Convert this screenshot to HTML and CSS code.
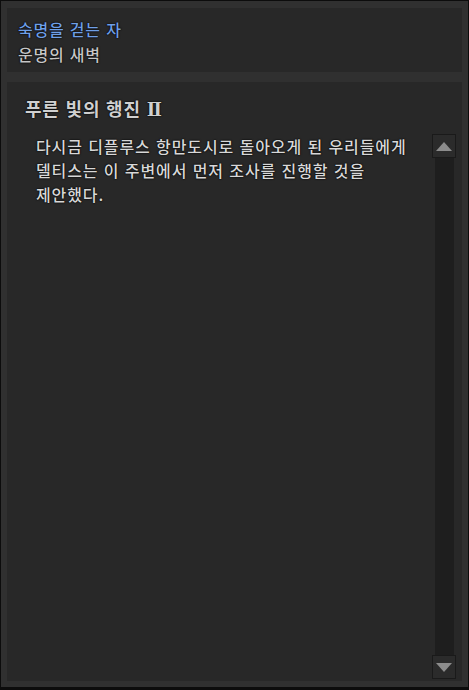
FILE: index.html
```html
<!DOCTYPE html>
<html lang="ko">
<head>
    <meta charset="UTF-8">
    <meta name="viewport" content="width=device-width, initial-scale=1.0">
    <title>퀘스트</title>
    <link rel="stylesheet" href="styles.css">
</head>
<body>

<div class="frame">
    <div class="header">
        <div class="quest-name">숙명을 걷는 자</div>
        <div class="chapter">운명의 새벽</div>
    </div>

    <div class="detail">
        <div class="detail-title">푸른 빛의 행진 <span class="numeral">Ⅱ</span></div>
        <div class="detail-body">
            <div class="detail-text">다시금 디플루스 항만도시로 돌아오게 된 우리들에게<br>델티스는 이 주변에서 먼저 조사를 진행할 것을<br>제안했다.</div>
            <div class="scrollbar">
                <div class="scroll-btn"><span class="arrow-up"></span></div>
                <div class="scroll-track"></div>
                <div class="scroll-btn"><span class="arrow-down"></span></div>
            </div>
        </div>
    </div>
</div>

</body>
</html>
```

FILE: styles.css
```css
html, body {
    margin: 0;
    height: 100%;
    background-color: #0c0c0c;
}
body {
    font-family: "Noto Sans CJK KR", "Noto Sans", sans-serif;
    padding: 1px 1px 3px 1px;
    box-sizing: border-box;
}
.frame {
    width: 467px;
    height: 686px;
    box-sizing: border-box;
    background-color: #303030;
    padding: 7px 6px 6px 6px;
    display: flex;
    flex-direction: column;
    gap: 10px;
}
.header {
    height: 64px;
    background-color: #282828;
    padding: 9px 0 0 11px;
    box-sizing: border-box;
}
.quest-name {
    color: #6f9fe6;
    font-size: 16px;
    font-weight: 500;
    letter-spacing: 0.8px;
    line-height: 25px;
    text-shadow: 0 0 2px #000, 0 0 1px #000;
}
.chapter {
    color: #c6c6c6;
    font-size: 16px;
    font-weight: 500;
    letter-spacing: 0.8px;
    line-height: 25px;
    text-shadow: 0 0 2px #000, 0 0 1px #000;
}
.detail {
    flex: 1;
    background-color: #282828;
    display: flex;
    flex-direction: column;
}
.detail-title {
    color: #d0d0d0;
    font-size: 18px;
    font-weight: bold;
    letter-spacing: 0.8px;
    line-height: 22px;
    padding: 15px 0 0 18px;
    text-shadow: 0 0 2px #000, 0 0 1px #000;
}
.numeral {
    font-family: "Liberation Serif", "DejaVu Serif", serif;
}
.detail-body {
    flex: 1;
    display: flex;
    padding: 13px 6px 2px 29px;
}
.detail-text {
    flex: 1;
    color: #d8d8d8;
    font-size: 16px;
    font-weight: 500;
    letter-spacing: 0.9px;
    line-height: 24px;
    padding-top: 0;
    text-shadow: 0 0 2px #000, 0 0 1px #000;
}
.scrollbar {
    width: 24px;
    display: flex;
    flex-direction: column;
    align-items: center;
}
.scroll-btn {
    width: 24px;
    height: 24px;
    box-sizing: border-box;
    background-color: #2b2b2b;
    border: 1px solid #1a1a1a;
    display: flex;
    align-items: center;
    justify-content: center;
}
.scroll-track {
    flex: 1;
    width: 19px;
    background-color: #1e1e1e;
}
.arrow-up {
    width: 0;
    height: 0;
    border-left: 8px solid transparent;
    border-right: 8px solid transparent;
    border-bottom: 9px solid #8c8c8c;
}
.arrow-down {
    width: 0;
    height: 0;
    border-left: 8px solid transparent;
    border-right: 8px solid transparent;
    border-top: 9px solid #8c8c8c;
}
```
